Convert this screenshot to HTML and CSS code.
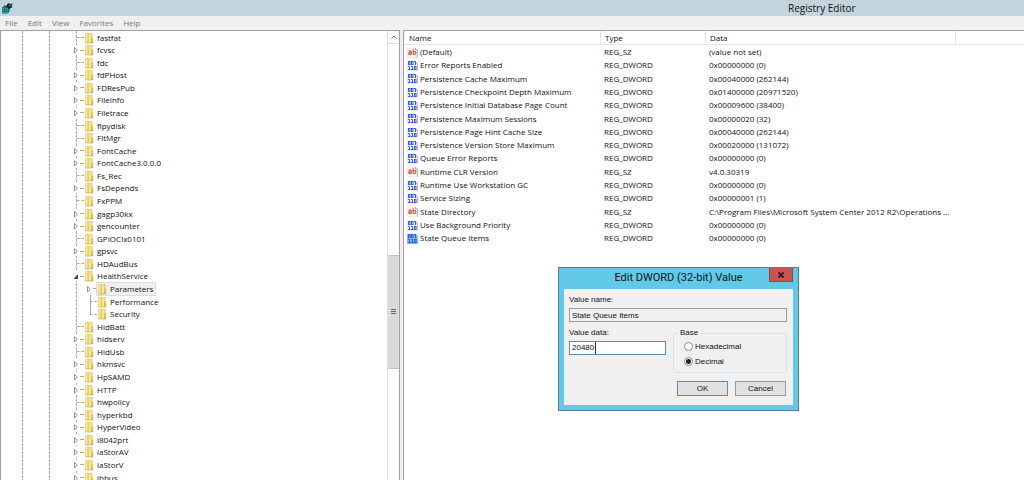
FILE: index.html
```html
<!DOCTYPE html>
<html lang="en">
<head>
<meta charset="utf-8">
<title>Registry Editor</title>
<link rel="stylesheet" href="styles.css">
</head>
<body>
<svg class="defs" aria-hidden="true">
  <defs>
    <linearGradient id="gold" x1="0" x2="1"><stop offset="0" stop-color="#f5e394"/><stop offset="1" stop-color="#e3c458"/></linearGradient>
    <symbol id="folder" viewBox="0 0 10 12">
      <path d="M1 1.5 4 .5 4.5 1.5V11H1.5L.7 10.200Z" fill="#efd97c"/>
      <path d="M4 1H8.500V5.500H9.200V11H4Z" fill="url(#gold)"/>
      <path d="M4.300 1V11" stroke="#d4b550" stroke-width=".6"/>
      <path d="M2.500 2V10" stroke="#faf0b8" stroke-width=".9"/>
      <path d="M5.200 2.500 7.200 2V9.500L5.200 11Z" fill="#f7e9a2"/>
      <path d="M7.500 5.500V11" stroke="#cdae47" stroke-width=".6"/>
      <path d="M1.200 11H9.200" stroke="#d2b34c" stroke-width=".7"/>
      <path d="M8.300 9V10.600" stroke="#8fae8b" stroke-width=".8"/>
    </symbol>
    <symbol id="closed" viewBox="0 0 8 10"><path d="M2.500 2.500V8L5.400 5.250Z" fill="#fff" stroke="#777" stroke-width=".8"/></symbol>
    <symbol id="open" viewBox="0 0 8 10"><path d="M6 3V8H1.500Z" fill="#444"/></symbol>
    <symbol id="page" viewBox="0 0 11 11"><path d="M.5 1H8.500L10.500 3V10.500H.5Z" fill="#f7f7f7" stroke="#d9d9dc" stroke-width=".5"/><path d="M8.500 1V3H10.500M10.300 3V10.500" fill="none" stroke="#9a9a9f" stroke-width=".7"/></symbol>
    <symbol id="sz" viewBox="0 0 11 11"><use href="#page"/>
      <g fill="none" stroke="#d9533a" stroke-width="1.100"><path d="M1.500 4.300Q4.300 3.200 4.300 5V7.700M4.300 5.700Q1.600 5.500 1.600 6.800 2.400 8.300 4.300 7"/><path d="M6.200 2.300V7.700M6.200 4.900Q8.800 3.500 8.900 5.800 8.700 8.200 6.200 7"/></g>
    </symbol>
    <symbol id="bits" viewBox="0 0 11 11">
      <g fill="none" stroke="#3558e6" stroke-width="1"><rect x="1.500" y="1.500" width="1.500" height="3"/><rect x="4.500" y="1.500" width="1.500" height="3"/><path d="M7 1.500H8.500V5M1 6.500H2.500V9.500M1 9.500H3.500M4 6.500H5.500V9.500M4 9.500H6.500"/><rect x="7.500" y="6.500" width="1.500" height="3"/></g>
    </symbol>
    <symbol id="dword" viewBox="0 0 11 11"><use href="#page"/><use href="#bits"/></symbol>
    <symbol id="dword-on" viewBox="0 0 11 11"><path d="M0 1H9L11 3V11H0Z" fill="#7cbcf2"/><use href="#bits"/></symbol>
  </defs>
</svg>
<div class="window">
  <header class="titlebar">
    <svg class="app-icon" viewBox="0 0 12 12" aria-hidden="true">
      <path d="M1 5.500 3 4H8.500V9.500L7 11.500H1Z" fill="#15757b"/>
      <path d="M1.500 6H7V11H1.500Z" fill="#39b4b4"/>
      <path d="M1.500 7.700H7M1.500 9.400H7M3.300 6V11M5.200 6V11" stroke="#0b5054" stroke-width=".6"/>
      <path d="M6 2.200 8 1 9 2.200 11.500 1.200 10.700 4 11.500 5.200 9.500 6 8 7.500 7 5.500 5 5Z" fill="#12292d"/>
      <path d="M3 3.500H5V5H3Z" fill="#234c50"/>
      <path d="M8 3H9.300V4.300H8Z" fill="#39b4b4"/>
    </svg>
    <h1>Registry Editor</h1>
  </header>
  <nav class="menu"><button>File</button><button>Edit</button><button>View</button><button>Favorites</button><button>Help</button></nav>
  <main class="panes">
    <section class="tree-pane">
      <ul class="tree" role="tree">
        <li><i></i><b></b><svg><use href="#folder"/></svg><span>fastfat</span></li>
        <li><svg class="arrow"><use href="#closed"/></svg><b></b><svg><use href="#folder"/></svg><span>fcvsc</span></li>
        <li><i></i><b></b><svg><use href="#folder"/></svg><span>fdc</span></li>
        <li><svg class="arrow"><use href="#closed"/></svg><b></b><svg><use href="#folder"/></svg><span>fdPHost</span></li>
        <li><svg class="arrow"><use href="#closed"/></svg><b></b><svg><use href="#folder"/></svg><span>FDResPub</span></li>
        <li><svg class="arrow"><use href="#closed"/></svg><b></b><svg><use href="#folder"/></svg><span>FileInfo</span></li>
        <li><svg class="arrow"><use href="#closed"/></svg><b></b><svg><use href="#folder"/></svg><span>Filetrace</span></li>
        <li><i></i><b></b><svg><use href="#folder"/></svg><span>flpydisk</span></li>
        <li><i></i><b></b><svg><use href="#folder"/></svg><span>FltMgr</span></li>
        <li><svg class="arrow"><use href="#closed"/></svg><b></b><svg><use href="#folder"/></svg><span>FontCache</span></li>
        <li><svg class="arrow"><use href="#closed"/></svg><b></b><svg><use href="#folder"/></svg><span>FontCache3.0.0.0</span></li>
        <li><i></i><b></b><svg><use href="#folder"/></svg><span>Fs_Rec</span></li>
        <li><svg class="arrow"><use href="#closed"/></svg><b></b><svg><use href="#folder"/></svg><span>FsDepends</span></li>
        <li><i></i><b></b><svg><use href="#folder"/></svg><span>FxPPM</span></li>
        <li><svg class="arrow"><use href="#closed"/></svg><b></b><svg><use href="#folder"/></svg><span>gagp30kx</span></li>
        <li><svg class="arrow"><use href="#closed"/></svg><b></b><svg><use href="#folder"/></svg><span>gencounter</span></li>
        <li><i></i><b></b><svg><use href="#folder"/></svg><span>GPIOClx0101</span></li>
        <li><svg class="arrow"><use href="#closed"/></svg><b></b><svg><use href="#folder"/></svg><span>gpsvc</span></li>
        <li><i></i><b></b><svg><use href="#folder"/></svg><span>HDAudBus</span></li>
        <li><svg class="arrow"><use href="#open"/></svg><b></b><svg><use href="#folder"/></svg><span>HealthService</span></li>
        <li class="child"><svg class="arrow"><use href="#closed"/></svg><b></b><em><svg><use href="#folder"/></svg><span>Parameters</span></em></li>
        <li class="child"><i class="line"></i><b></b><svg><use href="#folder"/></svg><span>Performance</span></li>
        <li class="child"><i class="line last"></i><b></b><svg><use href="#folder"/></svg><span>Security</span></li>
        <li><i></i><b></b><svg><use href="#folder"/></svg><span>HidBatt</span></li>
        <li><svg class="arrow"><use href="#closed"/></svg><b></b><svg><use href="#folder"/></svg><span>hidserv</span></li>
        <li><i></i><b></b><svg><use href="#folder"/></svg><span>HidUsb</span></li>
        <li><svg class="arrow"><use href="#closed"/></svg><b></b><svg><use href="#folder"/></svg><span>hkmsvc</span></li>
        <li><svg class="arrow"><use href="#closed"/></svg><b></b><svg><use href="#folder"/></svg><span>HpSAMD</span></li>
        <li><svg class="arrow"><use href="#closed"/></svg><b></b><svg><use href="#folder"/></svg><span>HTTP</span></li>
        <li><i></i><b></b><svg><use href="#folder"/></svg><span>hwpolicy</span></li>
        <li><svg class="arrow"><use href="#closed"/></svg><b></b><svg><use href="#folder"/></svg><span>hyperkbd</span></li>
        <li><svg class="arrow"><use href="#closed"/></svg><b></b><svg><use href="#folder"/></svg><span>HyperVideo</span></li>
        <li><svg class="arrow"><use href="#closed"/></svg><b></b><svg><use href="#folder"/></svg><span>i8042prt</span></li>
        <li><svg class="arrow"><use href="#closed"/></svg><b></b><svg><use href="#folder"/></svg><span>iaStorAV</span></li>
        <li><svg class="arrow"><use href="#closed"/></svg><b></b><svg><use href="#folder"/></svg><span>iaStorV</span></li>
        <li><svg class="arrow"><use href="#closed"/></svg><b></b><svg><use href="#folder"/></svg><span>ibbus</span></li>
      </ul>
      <div class="scrollbar">
        <button class="scroll-up" aria-label="Scroll up"><svg viewBox="0 0 8 6"><path d="M1.500 4.500 4 2 6.500 4.500" fill="none" stroke="#777" stroke-width="1"/></svg></button>
        <div class="above"></div>
        <div class="thumb"><svg viewBox="0 0 5 6"><path d="M0 .5H5M0 2.500H5M0 4.500H5" stroke="#666" stroke-width="1"/></svg></div>
        <div class="below"></div>
      </div>
    </section>
    <section class="list-pane">
      <table class="values">
        <colgroup><col class="c-name"><col class="c-type"><col class="c-data"><col></colgroup>
        <thead><tr><th>Name</th><th>Type</th><th>Data</th><th></th></tr></thead>
        <tbody>
          <tr><td><svg><use href="#sz"/></svg>(Default)</td><td>REG_SZ</td><td>(value not set)</td><td></td></tr>
          <tr><td><svg><use href="#dword"/></svg>Error Reports Enabled</td><td>REG_DWORD</td><td>0x00000000 (0)</td><td></td></tr>
          <tr><td><svg><use href="#dword"/></svg>Persistence Cache Maximum</td><td>REG_DWORD</td><td>0x00040000 (262144)</td><td></td></tr>
          <tr><td><svg><use href="#dword"/></svg>Persistence Checkpoint Depth Maximum</td><td>REG_DWORD</td><td>0x01400000 (20971520)</td><td></td></tr>
          <tr><td><svg><use href="#dword"/></svg>Persistence Initial Database Page Count</td><td>REG_DWORD</td><td>0x00009600 (38400)</td><td></td></tr>
          <tr><td><svg><use href="#dword"/></svg>Persistence Maximum Sessions</td><td>REG_DWORD</td><td>0x00000020 (32)</td><td></td></tr>
          <tr><td><svg><use href="#dword"/></svg>Persistence Page Hint Cache Size</td><td>REG_DWORD</td><td>0x00040000 (262144)</td><td></td></tr>
          <tr><td><svg><use href="#dword"/></svg>Persistence Version Store Maximum</td><td>REG_DWORD</td><td>0x00020000 (131072)</td><td></td></tr>
          <tr><td><svg><use href="#dword"/></svg>Queue Error Reports</td><td>REG_DWORD</td><td>0x00000000 (0)</td><td></td></tr>
          <tr><td><svg><use href="#sz"/></svg>Runtime CLR Version</td><td>REG_SZ</td><td>v4.0.30319</td><td></td></tr>
          <tr><td><svg><use href="#dword"/></svg>Runtime Use Workstation GC</td><td>REG_DWORD</td><td>0x00000000 (0)</td><td></td></tr>
          <tr><td><svg><use href="#dword"/></svg>Service Sizing</td><td>REG_DWORD</td><td>0x00000001 (1)</td><td></td></tr>
          <tr><td><svg><use href="#sz"/></svg>State Directory</td><td>REG_SZ</td><td>C:\Program Files\Microsoft System Center 2012 R2\Operations ...</td><td></td></tr>
          <tr><td><svg><use href="#dword"/></svg>Use Background Priority</td><td>REG_DWORD</td><td>0x00000000 (0)</td><td></td></tr>
          <tr><td><svg><use href="#dword-on"/></svg>State Queue Items</td><td>REG_DWORD</td><td>0x00000000 (0)</td><td></td></tr>
        </tbody>
      </table>
    </section>
  </main>
  <form class="dialog" role="dialog" aria-labelledby="dialog-title">
    <div class="dialog-head">
      <h2 id="dialog-title">Edit DWORD (32-bit) Value</h2>
      <button type="button" class="close" aria-label="Close"><svg viewBox="0 0 8 8"><path d="M1.500 1.500 6.500 6.500M6.500 1.500 1.500 6.500" stroke="#111" stroke-width="1.700"/></svg></button>
    </div>
    <div class="dialog-body">
      <label for="value-name">Value name:</label>
      <input class="text readonly" id="value-name" value="State Queue Items" readonly>
      <div class="columns">
        <div class="data-field">
          <label for="value-data">Value data:</label>
          <div class="text entry"><input id="value-data" value="20480" size="5"></div>
        </div>
        <fieldset>
          <legend>Base</legend>
          <label class="option"><input type="radio" name="base">Hexadecimal</label>
          <label class="option"><input type="radio" name="base" checked>Decimal</label>
        </fieldset>
      </div>
      <div class="actions"><button type="button" class="primary">OK</button><button type="button">Cancel</button></div>
    </div>
  </form>
</div>
</body>
</html>
```
FILE: styles.css
```css
* { box-sizing: border-box; }
body { margin: 0; background: #fff; color: #111; font: 8px/12px "Open Sans", "Noto Sans", sans-serif; }
button, input { font: inherit; color: inherit; }
.defs { position: absolute; width: 0; height: 0; }
.window { display: flex; flex-direction: column; height: 100vh; overflow: hidden; }

.titlebar { display: flex; align-items: center; flex: none; height: 16px; background: #c2d5dc; }
.app-icon { width: 12px; height: 12px; margin-left: 1px; }
.titlebar h1 { flex: 1; margin: 0 0 0 775px; font-size: 10px; line-height: 16px; font-weight: 400; white-space: nowrap; }
.menu { display: flex; flex: none; gap: 10px; height: 14px; padding-left: 5px; background: #f0f0f0; color: #777; }
.menu button { padding: 0; border: 0; background: none; line-height: 14px; }

.panes { display: flex; flex: 1; min-height: 0; background: #eeeef2; gap: 3px; }
.tree-pane { display: flex; flex: 0 0 400px; border: solid #9fa0a9; border-width: 1px 1px 0; background: #fff; overflow: hidden; }
.tree {
  flex: 1; display: grid; align-content: start; margin: 0; padding: 0 0 0 72px; list-style: none;
  grid-auto-rows: 13px 12px 13px 12px 13px 12px 13px;
  background:
    repeating-linear-gradient(#0000 0 3px, #fff 3px 4px) 21px 0 / 55px 100% no-repeat,
    linear-gradient(#aaa, #aaa) 21px 0 / 1px 100% no-repeat,
    linear-gradient(#aaa, #aaa) 48px 0 / 1px 100% no-repeat,
    linear-gradient(#aaa, #aaa) 75px 0 / 1px 100% no-repeat;
}
.tree li { display: flex; align-items: center; white-space: nowrap; }
.tree li i, .tree .arrow { flex: none; width: 8px; height: 10px; margin-left: -1px; }
.tree .arrow { background: #fff; }
.tree b { width: 4px; border-top: 1px dashed #aaa; }
.tree i + b { width: 7px; margin-left: -3px; }
.tree svg { flex: none; width: 10px; height: 12px; }
.tree span { padding-left: 3px; }
.tree .child { padding-left: 13px; }
.tree .line { align-self: stretch; height: auto; background: linear-gradient(#aaa, #aaa) 5px 0 / 1px 100% no-repeat; }
.tree .last { background-size: 1px 50%; }
.tree em { display: flex; align-items: center; height: 12px; padding-right: 2px; font-style: normal; background: #f0f0f0; box-shadow: 0 0 0 1px #dcdcdc; }

.scrollbar { display: flex; flex-direction: column; flex: none; width: 12px; border-left: 1px solid #dedede; }
.scroll-up { display: grid; place-items: center; height: 13px; padding: 0; border: 0; border-bottom: 1px solid #ddd; background: #fff; }
.scroll-up svg { width: 8px; height: 6px; }
.above { flex: 211; }
.thumb { flex: 113; display: grid; place-items: center; border: solid #c4c4c4; border-width: 1px 0; background: #dadada; }
.thumb svg { width: 5px; height: 6px; }
.below { flex: 111; }

.list-pane { flex: 1; min-width: 0; border: solid #9fa0a9; border-width: 1px 0 0 1px; background: #fff; }
.values { width: 100%; table-layout: fixed; border-collapse: separate; border-spacing: 0; }
.c-name { width: 197px; }
.c-type { width: 105px; }
.c-data { width: 250px; }
.values th { height: 14px; padding: 0 4px; border: solid #e6e6e6; border-width: 0 1px 1px 0; text-align: left; font-weight: 400; line-height: 13px; }
.values th:first-child { padding-left: 5px; }
.values th:last-child { border-right: 0; }
.values td { height: 13px; padding: 0 3px; line-height: 13px; white-space: nowrap; }
.values tr:nth-child(7n+3) td, .values tr:nth-child(7n+6) td { height: 14px; }
.values svg { width: 11px; height: 11px; margin: -2px 2px -1px 0; vertical-align: middle; }

.dialog { position: absolute; left: 558px; top: 267px; width: 241px; padding: 0 5px 5px; border: 1px solid #527f95; background: #62c9e8; font: 8px/12px "Liberation Sans", Arial, sans-serif; }
.dialog-head { display: flex; align-items: flex-start; justify-content: flex-end; height: 21px; }
.dialog-head h2 { flex: 1; margin: 0; padding-left: 24px; text-align: center; font: 400 11px/20px Roboto, "Open Sans", sans-serif; white-space: nowrap; }
.close { display: grid; place-items: center; width: 24px; height: 14px; padding: 0; border: 1px solid #8b4850; border-top: 0; background: #c75450; }
.close svg { width: 8px; height: 8px; }
.dialog-body { padding: 5px 6px 9px 5px; background: #f0f0f0; }
.dialog-body label { display: block; }
.text { display: block; width: 100%; height: 14px; margin-top: 2px; padding: 0 2px; border: 1px solid #9a9a9a; background: #f0f0f0; }
.columns { display: flex; justify-content: space-between; margin-top: 5px; }
.data-field { width: 97px; }
.entry { margin-top: 2px; border-color: #5a8db5; background: #fff; }
.entry input { display: block; width: 24px; height: 12px; padding: 0; border: 0; border-right: 1px solid #333; background: none; outline: 0; }
fieldset { width: 114px; min-width: 0; margin: 0; padding: 0 10px 3px; border: 1px solid #d9e1e6; border-radius: 2px; }
legend { margin-left: -6px; padding: 0 2px; line-height: 12px; }
.dialog-body .option { display: flex; align-items: center; gap: 2px; height: 15px; }
input[type="radio"] { appearance: none; width: 9px; height: 9px; margin: 0; border: 1px solid #888; border-radius: 50%; background: #fff; }
input[type="radio"]:checked { background: radial-gradient(#222 0 2px, #fff 3px); }
.actions { display: flex; justify-content: flex-end; gap: 7px; margin-top: 8px; padding-right: 1px; }
.actions button { width: 51px; height: 15px; padding: 0; border: 1px solid #999; background: #e1e1e1; line-height: 13px; }
.actions .primary { border-color: #5a8db5; }
```
